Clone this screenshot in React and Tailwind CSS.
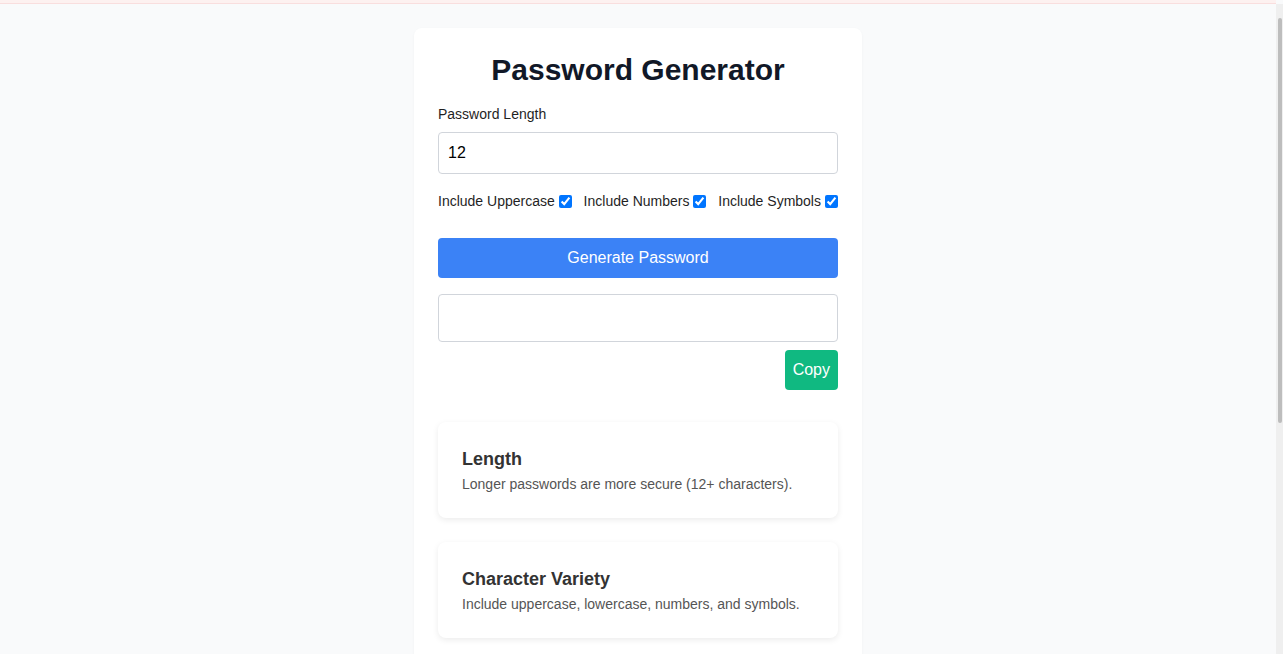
import { useState } from 'react';

const TipCard = ({ title, text }) => (
  <div className="bg-white rounded-lg px-6 pt-[25px] pb-6 shadow-[0_2px_6px_rgba(0,0,0,0.08)]">
    <h3 className="text-lg leading-6 font-semibold text-[#333333] mb-[3px]">{title}</h3>
    <p className="text-sm text-[#555555]">{text}</p>
  </div>
);

export default function App() {
  const [length, setLength] = useState(12);
  const [upper, setUpper] = useState(true);
  const [numbers, setNumbers] = useState(true);
  const [symbols, setSymbols] = useState(true);
  const [password, setPassword] = useState('');

  const generate = () => {
    let chars = 'abcdefghijklmnopqrstuvwxyz';
    if (upper) chars += 'ABCDEFGHIJKLMNOPQRSTUVWXYZ';
    if (numbers) chars += '0123456789';
    if (symbols) chars += '!@#$%^&*()_+-=';
    let out = '';
    for (let i = 0; i < length; i++) out += chars[Math.floor(Math.random() * chars.length)];
    setPassword(out);
  };

  return (
    <div className="min-h-screen bg-[#f9fafb] font-['Liberation_Sans',Arial,sans-serif] pr-[7px]">
      <div className="h-1 bg-[#fdf1f0] border-b border-[#f9dede]" />
      <div className="pt-6 pb-10">
        <div className="max-w-md mx-auto bg-white rounded-lg p-6 shadow-[0_1px_3px_rgba(0,0,0,0.04)]">
          <h1 className="text-3xl font-bold text-center text-[#111827] mb-4">Password Generator</h1>

          <label className="block text-sm text-[#1f1f1f] mb-2">Password Length</label>
          <input
            type="number"
            value={length}
            onChange={e => setLength(Number(e.target.value))}
            className="w-full px-[9px] py-2 border border-[#d1d5db] rounded text-base text-black outline-none"
          />

          <div className="flex justify-between items-center mt-[17px] text-sm text-[#1f1f1f]">
            <label className="flex items-center gap-1">
              Include Uppercase
              <input type="checkbox" checked={upper} onChange={e => setUpper(e.target.checked)} className="w-[13px] h-[13px]" />
            </label>
            <label className="flex items-center gap-1">
              Include Numbers
              <input type="checkbox" checked={numbers} onChange={e => setNumbers(e.target.checked)} className="w-[13px] h-[13px]" />
            </label>
            <label className="flex items-center gap-1">
              Include Symbols
              <input type="checkbox" checked={symbols} onChange={e => setSymbols(e.target.checked)} className="w-[13px] h-[13px]" />
            </label>
          </div>

          <button
            onClick={generate}
            className="w-full mt-[27px] py-2 bg-[#3b82f6] text-white text-base rounded"
          >
            Generate Password
          </button>

          <input
            type="text"
            readOnly
            value={password}
            className="w-full mt-4 px-3 py-[11px] border border-[#d1d5db] rounded text-base outline-none"
          />

          <div className="flex justify-end mt-2">
            <button className="px-2 py-2 bg-[#10b981] text-white text-base rounded">Copy</button>
          </div>

          <div className="mt-8 flex flex-col gap-6">
            <TipCard title="Length" text="Longer passwords are more secure (12+ characters)." />
            <TipCard title="Character Variety" text="Include uppercase, lowercase, numbers, and symbols." />
            <TipCard title="Avoid Common Words" text="Don't use dictionary words or personal information." />
          </div>
        </div>
      </div>

      {/* scrollbar strip */}
      <div className="fixed top-1 right-0 bottom-0 w-[7px] bg-[#efefef] flex justify-center pt-[14px]">
        <div className="w-[4px] h-[405px] rounded-full bg-[#bdbdbd]" />
      </div>
    </div>
  );
}
